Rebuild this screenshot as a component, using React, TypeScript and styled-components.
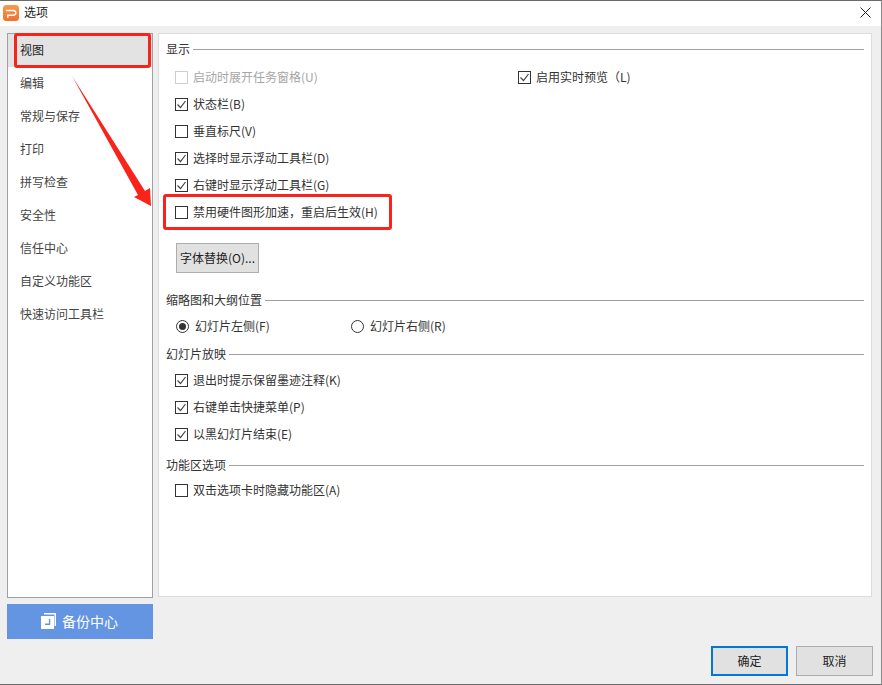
import React from "react";
import styled, { createGlobalStyle } from "styled-components";

const Global = createGlobalStyle`
  html, body { margin: 0; padding: 0; background: #efefef; }
  * { box-sizing: border-box; }
`;

const Window = styled.div`
  position: relative;
  width: 882px;
  height: 685px;
  background: #efefef;
  border-top: 1px solid #6b6b6b;
  border-right: 1px solid #8a8a8a;
  border-bottom: 1px solid #6b6b6b;
  font-family: "Noto Sans CJK SC", "Liberation Sans", sans-serif;
  font-size: 12px;
  color: #333;
  overflow: hidden;
`;

const TitleBar = styled.header`
  height: 25px;
  background: #fff;
  display: flex;
  align-items: center;
  padding: 0 10px 2px 3px;
  gap: 5px;
`;

const TitleText = styled.span`
  flex: 1;
  line-height: 16px;
  padding-bottom: 2px;
  color: #222;
`;

const Body = styled.div`
  display: grid;
  grid-template-columns: 146px 714px;
  column-gap: 5px;
  padding: 7px 0 0 7px;
`;

const LeftColumn = styled.div`
  display: flex;
  flex-direction: column;
  gap: 6px;
`;

const RightColumn = styled.div`
  display: flex;
  flex-direction: column;
`;

const Nav = styled.nav`
  height: 565px;
  background: #fff;
  border: 1px solid #a0a0a0;
`;

const NavItem = styled.div<{ $active?: boolean }>`
  height: 33px;
  display: flex;
  align-items: center;
  padding: 0 0 2px 12px;
  background: ${(p) => (p.$active ? "#e3e3e3" : "transparent")};
  color: ${(p) => (p.$active ? "#222" : "#444")};
`;

const BackupButton = styled.button`
  height: 35px;
  border: 0;
  background: #6495e3;
  color: #fff;
  font: inherit;
  font-size: 14px;
  display: flex;
  align-items: center;
  justify-content: center;
  gap: 6px;
  padding: 0 1px 2px 0;
`;

const Panel = styled.main`
  height: 564px;
  background: #fff;
  border: 1px solid #dcdcdc;
  padding: 7px 7px 0 7px;
`;

const Section = styled.section<{ $top?: number }>`
  margin-top: ${(p) => p.$top ?? 0}px;
`;

const SectionHead = styled.div<{ $gap: number }>`
  display: flex;
  align-items: center;
  gap: 3px;
  height: 16px;
  line-height: 16px;
  margin-bottom: ${(p) => p.$gap}px;
  color: #333;
  &::after {
    content: "";
    flex: 1;
    height: 1px;
    background: #a0a0a0;
  }
`;

const Row = styled.div<{ $indent?: number }>`
  display: flex;
  height: 27px;
  align-items: center;
  padding-left: ${(p) => p.$indent ?? 9}px;
`;

const Option = styled.label<{ $width?: number; $disabled?: boolean; $gap?: number }>`
  display: flex;
  align-items: center;
  gap: ${(p) => p.$gap ?? 5}px;
  line-height: 16px;
  width: ${(p) => (p.$width ? `${p.$width}px` : "auto")};
  color: ${(p) => (p.$disabled ? "#a6a6a6" : "#333")};
`;

const OptionText = styled.span`
  padding-bottom: 2px;
`;

const CheckBox = styled.span<{ $disabled?: boolean }>`
  width: 13px;
  height: 13px;
  flex: none;
  display: flex;
  border: 1px solid ${(p) => (p.$disabled ? "#cfcfcf" : "#333")};
  background: #fff;
`;

const RadioMark = styled.span`
  width: 13px;
  height: 13px;
  flex: none;
  display: flex;
  align-items: center;
  justify-content: center;
  border: 1px solid #333;
  border-radius: 50%;
  background: #fff;
`;

const RadioDot = styled.span`
  width: 7px;
  height: 7px;
  border-radius: 50%;
  background: #333;
`;

const GrayButton = styled.button<{ $primary?: boolean }>`
  height: 30px;
  background: #e1e1e1;
  border: ${(p) => (p.$primary ? "2px solid #0078d7" : "1px solid #adadad")};
  color: #222;
  font: inherit;
  padding: 0 0 2px;
`;

const FontButton = styled(GrayButton)`
  display: block;
  width: 83px;
  margin: 17px 0 0 10px;
`;

const Footer = styled.footer`
  display: flex;
  justify-content: flex-end;
  gap: 8px;
  margin-top: 49px;
  margin-right: -1px;
`;

const FooterButton = styled(GrayButton)`
  width: 77px;
`;

const RedFrame = styled.div<{ $x: number; $y: number; $w: number; $h: number }>`
  position: absolute;
  left: ${(p) => p.$x}px;
  top: ${(p) => p.$y}px;
  width: ${(p) => p.$w}px;
  height: ${(p) => p.$h}px;
  border: 3px solid #f8231a;
  border-radius: 3px;
  pointer-events: none;
`;

const ArrowLayer = styled.svg`
  position: absolute;
  left: 0;
  top: -1px;
  pointer-events: none;
`;

const Logo = () => (
  <svg width="16" height="16" viewBox="0 0 16 16">
    <defs>
      <linearGradient id="logoFill" x1="0" y1="0" x2="0" y2="1">
        <stop offset="0" stopColor="#f99a4a" />
        <stop offset="1" stopColor="#f3702f" />
      </linearGradient>
    </defs>
    <rect width="16" height="16" rx="3.5" fill="url(#logoFill)" />
    <path d="M3 5.500h7.500a2.300 2.300 0 0 1 0 4.700H4.800V13" fill="none" stroke="#fff" strokeWidth="1.400" />
  </svg>
);

const CloseIcon = () => (
  <svg width="11" height="11" viewBox="0 0 11 11">
    <path d="M.5.5l10 10M10.500.5l-10 10" stroke="#222" strokeWidth="1" fill="none" />
  </svg>
);

const Tick = ({ color }: { color: string }) => (
  <svg width="11" height="11" viewBox="0 0 11 11">
    <path d="M1.500 5.500l3 3 5-6.500" fill="none" stroke={color} strokeWidth="1.200" />
  </svg>
);

const BackupIcon = () => (
  <svg width="15" height="16" viewBox="0 0 15 16">
    <path d="M3 0h12v13h-1.500V1.500H3z" fill="#fff" />
    <path d="M0 3h13v13H0z" fill="#fff" />
    <path d="M9.300 6v6H4v-1.400h3.900V6z" fill="#6495e3" />
  </svg>
);

const Check = ({ label, checked, disabled, width }: { label: string; checked?: boolean; disabled?: boolean; width?: number }) => (
  <Option $width={width} $disabled={disabled}>
    <CheckBox $disabled={disabled}>{checked && <Tick color="#444" />}</CheckBox>
    <OptionText>{label}</OptionText>
  </Option>
);

const Radio = ({ label, checked, width }: { label: string; checked?: boolean; width?: number }) => (
  <Option $width={width} $gap={6}>
    <RadioMark>{checked && <RadioDot />}</RadioMark>
    <OptionText>{label}</OptionText>
  </Option>
);

const navItems = ["视图", "编辑", "常规与保存", "打印", "拼写检查", "安全性", "信任中心", "自定义功能区", "快速访问工具栏"];

export default function App() {
  return (
    <Window>
      <Global />
      <TitleBar>
        <Logo />
        <TitleText>选项</TitleText>
        <CloseIcon />
      </TitleBar>
      <Body>
        <LeftColumn>
          <Nav>
            {navItems.map((n, i) => (
              <NavItem key={n} $active={i === 0}>{n}</NavItem>
            ))}
          </Nav>
          <BackupButton>
            <BackupIcon />
            备份中心
          </BackupButton>
        </LeftColumn>
        <RightColumn>
          <Panel>
            <Section>
              <SectionHead $gap={7}>显示</SectionHead>
              <Row>
                <Check label="启动时展开任务窗格(U)" disabled width={343} />
                <Check label="启用实时预览（L)" checked />
              </Row>
              <Row><Check label="状态栏(B)" checked /></Row>
              <Row><Check label="垂直标尺(V)" /></Row>
              <Row><Check label="选择时显示浮动工具栏(D)" checked /></Row>
              <Row><Check label="右键时显示浮动工具栏(G)" checked /></Row>
              <Row><Check label="禁用硬件图形加速，重启后生效(H)" /></Row>
              <FontButton>字体替换(O)...</FontButton>
            </Section>
            <Section $top={19}>
              <SectionHead $gap={5}>缩略图和大纲位置</SectionHead>
              <Row $indent={10}>
                <Radio label="幻灯片左侧(F)" checked width={175} />
                <Radio label="幻灯片右侧(R)" />
              </Row>
            </Section>
            <Section $top={6}>
              <SectionHead $gap={5}>幻灯片放映</SectionHead>
              <Row><Check label="退出时提示保留墨迹注释(K)" checked /></Row>
              <Row><Check label="右键单击快捷菜单(P)" checked /></Row>
              <Row><Check label="以黑幻灯片结束(E)" checked /></Row>
            </Section>
            <Section $top={9}>
              <SectionHead $gap={4}>功能区选项</SectionHead>
              <Row><Check label="双击选项卡时隐藏功能区(A)" /></Row>
            </Section>
          </Panel>
          <Footer>
            <FooterButton $primary>确定</FooterButton>
            <FooterButton>取消</FooterButton>
          </Footer>
        </RightColumn>
      </Body>
      <RedFrame $x={14} $y={32} $w={137} $h={35} />
      <RedFrame $x={163} $y={193} $w={229} $h={36} />
      <ArrowLayer width="882" height="685">
        <polygon points="72,76 145,191 150,188 151,206 134,197 138,195" fill="#f8231a" />
      </ArrowLayer>
    </Window>
  );
}
